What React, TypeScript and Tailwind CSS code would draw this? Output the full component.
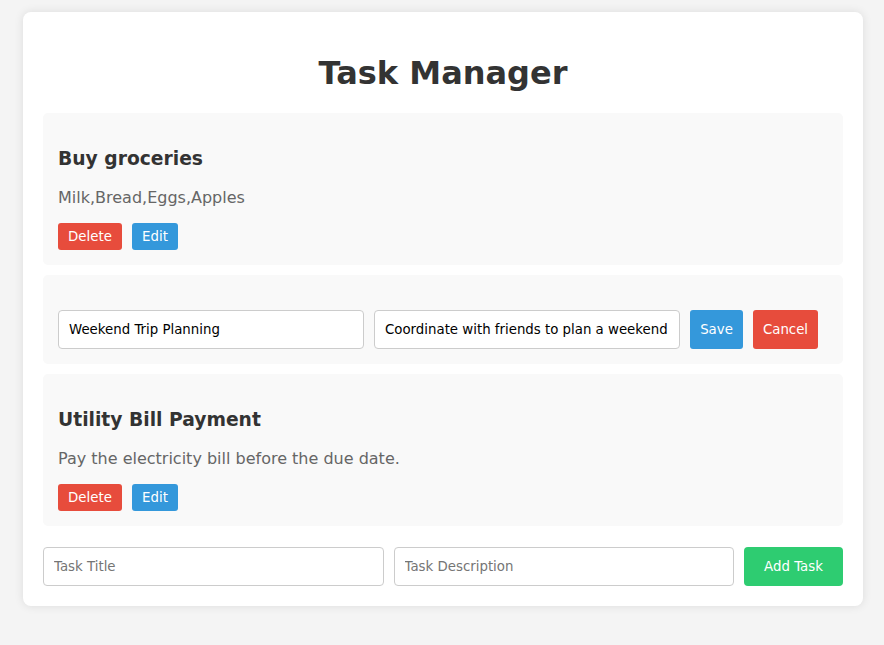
import React, { useState } from 'react';

interface Task {
    id: number;
    title: string;
    description: string;
}

export default function App() {
    const [tasks] = useState<Task[]>([
        { id: 1, title: 'Buy groceries', description: 'Milk,Bread,Eggs,Apples' },
        { id: 2, title: 'Weekend Trip Planning', description: 'Coordinate with friends to plan a weekend getaway.' },
        { id: 3, title: 'Utility Bill Payment', description: 'Pay the electricity bill before the due date.' },
    ]);
    const editingId = 2;

    return (
        <div className="min-h-[645px] bg-[#f4f4f4] pt-3 font-['DejaVu_Sans',sans-serif]">
            <div className="w-[840px] ml-[23px] bg-white rounded-lg p-5 shadow-[0_0_10px_rgba(0,0,0,0.1)]">
                <h1 className="text-[32px] font-bold text-[#333] text-center mt-[23px] mb-[21px] leading-[37px]">Task Manager</h1>

                <div className="flex flex-col gap-2.5">
                    {tasks.map((task) =>
                        task.id === editingId ? (
                            // edit mode
                            <div key={task.id} className="bg-[#f9f9f9] rounded-[5px] px-[15px] pt-[35px] pb-[15px] flex gap-2.5">
                                <input
                                    defaultValue={task.title}
                                    className="w-[306px] h-[39px] px-2.5 text-[13.33px] text-black bg-white border border-[#ccc] rounded outline-none"
                                />
                                <input
                                    defaultValue={task.description}
                                    className="w-[306px] h-[39px] px-2.5 text-[13.33px] text-black bg-white border border-[#ccc] rounded outline-none"
                                />
                                <button className="h-[39px] w-[53px] bg-[#3498db] text-white text-[13.33px] rounded-[3px]">Save</button>
                                <button className="h-[39px] w-[65px] bg-[#e74c3c] text-white text-[13.33px] rounded-[3px]">Cancel</button>
                            </div>
                        ) : (
                            <div key={task.id} className="bg-[#f9f9f9] rounded-[5px] p-[15px]">
                                <h3 className="text-[18.72px] font-bold text-[#333] mt-[20px] mb-[18px] leading-[22px]">{task.title}</h3>
                                <p className="text-base text-[#666] leading-[19px] mb-[16px]">{task.description}</p>
                                <div className="flex gap-2.5">
                                    <button className="h-[27px] w-16 bg-[#e74c3c] text-white text-[13.33px] rounded-[3px]">Delete</button>
                                    <button className="h-[27px] w-[46px] bg-[#3498db] text-white text-[13.33px] rounded-[3px]">Edit</button>
                                </div>
                            </div>
                        )
                    )}
                </div>

                {/* add task */}
                <div className="flex gap-2.5 mt-[21px]">
                    <input
                        placeholder="Task Title"
                        className="flex-1 min-w-0 h-[39px] px-2.5 text-[13.33px] bg-white border border-[#ccc] rounded outline-none placeholder:text-[#757575]"
                    />
                    <input
                        placeholder="Task Description"
                        className="flex-1 min-w-0 h-[39px] px-2.5 text-[13.33px] bg-white border border-[#ccc] rounded outline-none placeholder:text-[#757575]"
                    />
                    <button className="h-[39px] w-[99px] bg-[#2ecc71] text-white text-[13.33px] rounded">Add Task</button>
                </div>
            </div>
        </div>
    );
}
